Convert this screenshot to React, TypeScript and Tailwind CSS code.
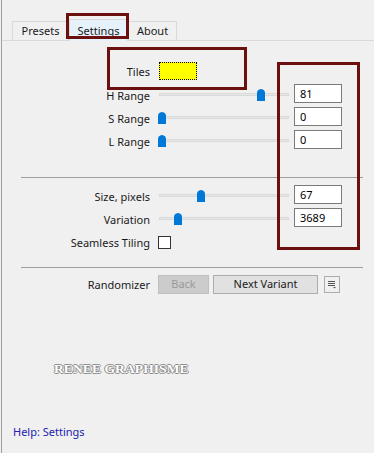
import React from 'react';

const font = "font-['Noto_Sans',sans-serif]";

function Thumb() {
  return (
    <svg width="8" height="12" viewBox="0 0 8 12" className="block">
      <path d="M0 4 Q0 0.5 4 0 Q8 0.5 8 4 V12 H0 Z" fill="#0078d7" />
    </svg>
  );
}

function Slider({ pos }: { pos: number }) {
  // pos = thumb centre, px from track start
  return (
    <div className="relative w-[130px] h-[14px] flex items-center">
      <div className="w-full h-[3px] bg-[#e7e7e7] border border-[#dadada]" />
      <div className="absolute top-[1px]" style={{ left: pos - 4 }}>
        <Thumb />
      </div>
    </div>
  );
}

function Row({ label, pos, value }: { label: string; pos: number; value: string }) {
  return (
    <div className="flex items-center h-[23px]">
      <div className="w-[149px] text-right pr-[1px] mt-[5px]">{label}</div>
      <div className="ml-[8px] mt-[2px]">
        <Slider pos={pos} />
      </div>
      <div className="ml-[5px] w-[48px] h-[19px] bg-white border border-[#7a7a7a] pl-[5px] leading-[17px] text-black">
        {value}
      </div>
    </div>
  );
}

function Tab({ label, active }: { label: string; active?: boolean }) {
  return active ? (
    <div className="w-[59px] h-[22px] -mb-[1px] bg-[#e5f1fb] border border-[#d9d9d9] border-b-0 flex items-center justify-center pt-[2px]">
      {label}
    </div>
  ) : (
    <div className="h-[19px] bg-[#f0f0f0] border border-[#d9d9d9] border-b-0 flex items-center justify-center pt-[1px]">
      {label}
    </div>
  );
}

export default function App() {
  return (
    <div className={`relative w-[374px] h-[453px] bg-[#f0f0f0] pl-[1px] overflow-hidden text-[11px] text-[#1a1a1a] ${font}`}>
      <div className="h-full border-l border-[#a0a0a0]">
        {/* tab strip */}
        <div className="h-[41px] flex items-end pl-[10px] border-b border-[#d9d9d9]">
          <div className="w-[57px]"><Tab label="Presets" /></div>
          <Tab label="Settings" active />
          <div className="w-[49px]"><Tab label="About" /></div>
        </div>

        {/* tiles */}
        <div className="mt-[21px] flex items-center h-[18px]">
          <div className="w-[149px] text-right pr-[1px] mt-[3px]">Tiles</div>
          <div className="ml-[8px] w-[38px] h-[18px] bg-[#ffff00] border border-dotted border-black" />
        </div>

        <div className="mt-[2px]">
          <Row label="H Range" pos={102} value="81" />
          <Row label="S Range" pos={3} value="0" />
          <Row label="L Range" pos={3} value="0" />
        </div>

        <div className="mt-[26px] ml-[19px] mr-[11px] h-[1px] bg-[#a0a0a0]" />

        <div className="mt-[5px]">
          <Row label="Size, pixels" pos={42} value="67" />
          <Row label="Variation" pos={19} value="3689" />
          <div className="flex items-center h-[23px]">
            <div className="w-[149px] text-right pr-[1px] mt-[5px]">Seamless Tiling</div>
            <div className="ml-[7px] mt-[4px] w-[13px] h-[13px] bg-white border border-[#333333]" />
          </div>
        </div>

        <div className="mt-[15px] ml-[19px] mr-[11px] h-[1px] bg-[#a0a0a0]" />

        {/* randomizer */}
        <div className="mt-[6px] flex items-center h-[20px]">
          <div className="w-[149px] text-right pr-[1px] mt-[3px]">Randomizer</div>
          <div className="ml-[7px] w-[51px] h-[19px] bg-[#cccccc] border border-[#bfbfbf] text-[#9a9a9a] flex items-center justify-center pt-[1px]">
            Back
          </div>
          <div className="ml-[4px] w-[105px] h-[19px] bg-[#e1e1e1] border border-[#adadad] flex items-center justify-center pt-[1px]">
            Next Variant
          </div>
          <div className="ml-[6px] w-[16px] h-[17px] bg-[#f0f0f0] border border-[#adadad] flex items-center justify-center">
            <svg width="10" height="9" viewBox="0 0 10 9">
              <path d="M1 1.5 H8 M1 3.5 H8 M1 5.5 H8" stroke="#555" strokeWidth="1" />
              <path d="M6 7 H9 L7.5 8.5 Z" fill="#555" />
            </svg>
          </div>
        </div>

        {/* watermark */}
        <div className="mt-[65px] ml-[52px] font-['Liberation_Serif',serif] text-[13.5px] font-bold tracking-[0.1px] text-white [text-shadow:-1px_0_#8a8a8a,1px_0_#8a8a8a,0_-1px_#8a8a8a,0_1px_#8a8a8a]">
          RENEE GRAPHISME
        </div>

        <div className="mt-[45px] ml-[11px] text-[#2222b0]">Help: Settings</div>
      </div>

      {/* annotation boxes */}
      <div className="absolute left-[66px] top-[13px] w-[63px] h-[26px] border-[3px] border-[#6b0f0f]" />
      <div className="absolute left-[107px] top-[47px] w-[140px] h-[43px] border-[3px] border-[#6b0f0f]" />
      <div className="absolute left-[277px] top-[62px] w-[83px] h-[188px] border-[3px] border-[#6b0f0f]" />
    </div>
  );
}
